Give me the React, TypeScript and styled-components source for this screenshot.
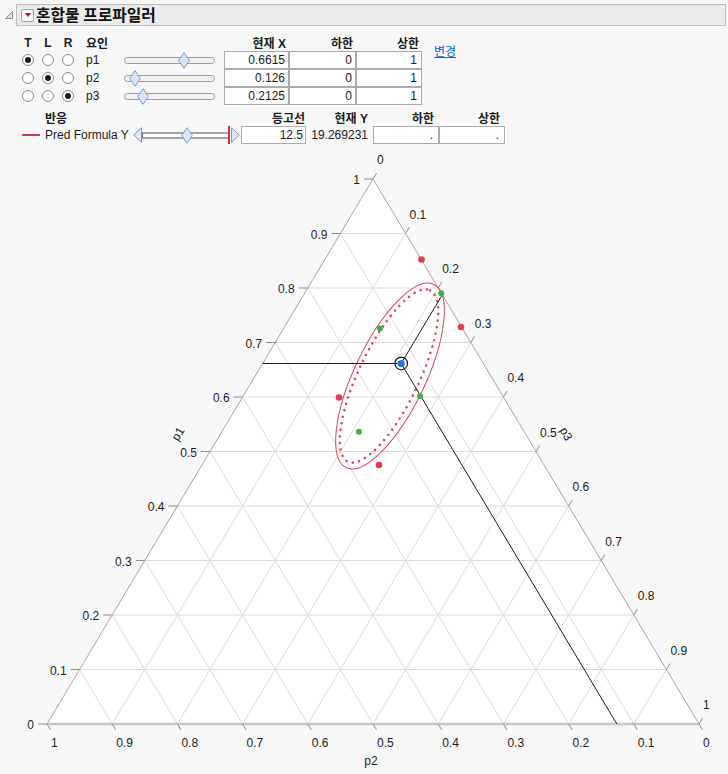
import React from "react";
import styled, { createGlobalStyle } from "styled-components";

const GlobalStyle = createGlobalStyle`
  html, body { margin: 0; padding: 0; background: #f7f7f7; }
  body {
    font-family: "Liberation Sans", "Noto Sans CJK KR", sans-serif;
    font-size: 12px;
    color: #1a1a1a;
  }
  * { box-sizing: border-box; }
`;

const Page = styled.div`
  width: 728px;
  height: 774px;
  overflow: hidden;
  background: #f7f7f7;
  padding-top: 4px;
`;

const TitleRow = styled.div`
  display: flex;
  align-items: center;
  padding-left: 5px;
  padding-right: 2px;
  gap: 3px;
`;

const Disclosure = styled.svg`
  width: 8px;
  height: 8px;
  flex: none;
`;

const TitleBar = styled.div`
  flex: 1;
  height: 22px;
  border: 1px solid #bdbdbd;
  background: #ebebeb;
  display: flex;
  align-items: center;
  padding-left: 4px;
  gap: 2px;
`;

const MenuButton = styled.div`
  width: 13px;
  height: 13px;
  border: 1px solid #a4a4a4;
  border-radius: 2px;
  background: #f6f6f6;
  display: flex;
  align-items: center;
  justify-content: center;
  &::after {
    content: "";
    width: 0;
    height: 0;
    border-left: 3.5px solid transparent;
    border-right: 3.5px solid transparent;
    border-top: 4px solid #d4001a;
  }
`;

const Title = styled.div`
  font-family: "Noto Sans CJK KR", sans-serif;
  font-weight: 700;
  font-size: 15.8px;
  line-height: 20px;
  color: #111;
`;

const FactorGrid = styled.div`
  display: grid;
  grid-template-columns: 20px 20px 20px 46px 100px 65px 67px 66px auto;
  grid-template-rows: 17px 18px 18px 18px;
  margin-top: 8px;
  padding-left: 18px;
`;

const ResponseGrid = styled.div`
  display: grid;
  grid-template-columns: 18px 93px 108px 65px 67px 66px 66px;
  grid-template-rows: 17px 18px;
  margin-top: 4px;
  padding-left: 22px;
`;

const Head = styled.div<{ $align?: "left" | "center" | "right"; $pad?: number }>`
  font-weight: 700;
  display: flex;
  align-items: center;
  justify-content: ${(p) =>
    p.$align === "center" ? "center" : p.$align === "right" ? "flex-end" : "flex-start"};
  padding-left: ${(p) => (p.$align === "left" || !p.$align ? p.$pad ?? 0 : 0)}px;
  padding-right: ${(p) => (p.$align === "right" ? p.$pad ?? 0 : 0)}px;
  white-space: nowrap;
`;

const RadioCell = styled.div`
  display: flex;
  align-items: center;
  justify-content: center;
`;

const Radio = styled.div<{ $on?: boolean }>`
  width: 12px;
  height: 12px;
  border-radius: 50%;
  border: 1px solid #8c8c8c;
  background: #fff;
  display: flex;
  align-items: center;
  justify-content: center;
  &::after {
    content: "";
    width: 6px;
    height: 6px;
    border-radius: 50%;
    background: ${(p) => (p.$on ? "#1a1a1a" : "transparent")};
  }
`;

const NameCell = styled.div<{ $pad?: number }>`
  display: flex;
  align-items: center;
  padding-left: ${(p) => p.$pad ?? 8}px;
  white-space: nowrap;
`;

const SliderCell = styled.div`
  position: relative;
  display: flex;
  align-items: center;
`;

const Track = styled.div`
  width: 91px;
  height: 7px;
  border: 1.5px solid #9c9c9c;
  border-radius: 4px;
  background: #f2f2f2;
`;

const Knob = styled.svg`
  position: absolute;
  top: 1px;
  width: 12px;
  height: 17px;
`;

const ValueBox = styled.div<{ $pad?: number }>`
  height: 18px;
  border: 1px solid #ababab;
  background: #fff;
  text-align: right;
  padding-right: ${(p) => p.$pad ?? 3}px;
  line-height: 16px;
`;

const PlainValue = styled.div`
  display: flex;
  align-items: center;
  justify-content: flex-end;
  padding-right: 5px;
`;

const LinkCell = styled.a`
  grid-column: 9;
  grid-row: 1;
  align-self: start;
  margin-top: 9px;
  padding-left: 12px;
  color: #0a64d8;
  text-decoration: underline;
  font-family: "Noto Sans CJK KR", sans-serif;
  font-size: 12px;
  line-height: 16px;
  white-space: nowrap;
  cursor: pointer;
`;

const RowEnd = styled.span`
  grid-column: 9;
`;

const LegendCell = styled.div`
  display: flex;
  align-items: center;
  &::before {
    content: "";
    width: 18px;
    height: 2px;
    background: #d23c4f;
  }
`;

const ContourSlider = styled.div`
  position: relative;
  display: flex;
  align-items: center;
`;

const Arrow = styled.svg<{ $gap?: number }>`
  width: 9px;
  height: 16px;
  flex: none;
  margin-left: ${(p) => p.$gap ?? 0}px;
`;

const HollowTrack = styled.div`
  width: 87px;
  height: 7px;
  border-top: 2px solid #a3a3a3;
  border-bottom: 2px solid #a3a3a3;
  border-left: 1px solid #6a6a6a;
  background: #fff;
`;

const ContourMark = styled.div`
  position: absolute;
  left: 95px;
  top: 0;
  width: 1.5px;
  height: 18px;
  background: #d3304a;
`;

const Plot = styled.svg`
  display: block;
  margin-top: 6px;
  width: 728px;
  height: 624px;
  font-family: "Liberation Sans", sans-serif;
  font-size: 12px;
`;

const factors = [
  { name: "p1", value: 0.6615, sel: 0, text: "0.6615" },
  { name: "p2", value: 0.126, sel: 1, text: "0.126" },
  { name: "p3", value: 0.2125, sel: 2, text: "0.2125" },
];

const Diamond = ({ left }: { left: number }) => (
  <Knob style={{ left }} viewBox="0 0 12 17">
    <polygon points="6,0.7 11.3,8.5 6,16.3 0.7,8.5" fill="#dbe7f6" stroke="#7c9dc8" strokeWidth="1" />
  </Knob>
);

const LX = 47, RX = 699, AX = 373, BY = 724, AY = 179;
const pt = (p1: number, p2: number, p3: number): [number, number] => [
  LX * p2 + RX * p3 + AX * p1,
  BY * (p2 + p3) + AY * p1,
];

const ticks = Array.from({ length: 11 }, (_, i) => i / 10);
const fmt = (v: number) => (v === 0 ? "0" : v === 1 ? "1" : v.toFixed(1));

const Chart = () => {
  const grid: React.ReactNode[] = [];
  for (let i = 1; i <= 9; i++) {
    const v = i / 10;
    const lines: [[number, number], [number, number]][] = [
      [pt(v, 1 - v, 0), pt(v, 0, 1 - v)],
      [pt(0, v, 1 - v), pt(1 - v, v, 0)],
      [pt(1 - v, 0, v), pt(0, 1 - v, v)],
    ];
    lines.forEach(([a, b], k) =>
      grid.push(
        <line key={`g${i}-${k}`} x1={a[0]} y1={a[1]} x2={b[0]} y2={b[1]} stroke="#dcdcdc" strokeWidth="1" />
      )
    );
  }

  const cur = { p1: 0.6615, p2: 0.126, p3: 0.2125 };
  const c = pt(cur.p1, cur.p2, cur.p3);
  const eL = pt(cur.p1, 1 - cur.p1, 0);
  const eR = pt(1 - cur.p3, 0, cur.p3);
  const eB = pt(0, cur.p2, 1 - cur.p2);

  const red: [number, number][] = [
    [421.5, 259.5],
    [461, 327],
    [339, 397.5],
    [379, 465],
  ];
  const green: [number, number][] = [
    [441.3, 293.3],
    [420, 396],
    [380, 328.5],
    [359, 431.7],
  ];

  return (
    <Plot viewBox="0 0 728 624">
      <g transform="translate(0,-150)">
        <polygon points={`${LX},${BY} ${RX},${BY} ${AX},${AY}`} fill="#fff" />
        {grid}
        <line x1={LX} y1={BY} x2={AX} y2={AY} stroke="#a6a6a6" strokeWidth="1" />
        <line x1={RX} y1={BY} x2={AX} y2={AY} stroke="#a6a6a6" strokeWidth="1" />
        <line x1={LX} y1={BY} x2={RX} y2={BY} stroke="#c8c8c8" strokeWidth="2.5" />

        {ticks.map((v) => {
          const [x, y] = pt(v, 1 - v, 0);
          return (
            <g key={`l${v}`}>
              <line x1={x - 9} y1={y} x2={x} y2={y} stroke="#8e8e8e" strokeWidth="1" />
              <text x={x - 13} y={y + 5} textAnchor="end" fill="#1c1c1c">
                {fmt(v)}
              </text>
            </g>
          );
        })}
        {ticks.map((v) => {
          const [x, y] = pt(0, v, 1 - v);
          return (
            <g key={`b${v}`}>
              <line x1={x} y1={y} x2={x + 3.6} y2={y + 6} stroke="#8e8e8e" strokeWidth="1" />
              <text x={x + 4} y={747} fill="#1c1c1c">
                {fmt(v)}
              </text>
            </g>
          );
        })}
        {ticks.map((v) => {
          const [x, y] = pt(1 - v, 0, v);
          return (
            <g key={`r${v}`}>
              <line x1={x} y1={y} x2={x + 3.6} y2={y - 6} stroke="#8e8e8e" strokeWidth="1" />
              <text x={x + 4} y={y - 15} fill="#1c1c1c">
                {fmt(v)}
              </text>
            </g>
          );
        })}

        <text x={178} y={438} textAnchor="middle" transform="rotate(-59 178 434)" fill="#1c1c1c">
          p1
        </text>
        <text x={566} y={438} textAnchor="middle" transform="rotate(59 566 434)" fill="#1c1c1c">
          p3
        </text>
        <text x={371} y={765} textAnchor="middle" fill="#1c1c1c">
          p2
        </text>

        <ellipse cx={390} cy={376} rx={101.5} ry={35.5} transform="rotate(-64.4 390 376)" fill="none" stroke="#d9485c" strokeWidth="1" />
        <ellipse
          cx={389}
          cy={376}
          rx={95}
          ry={30}
          transform="rotate(-64.4 389 376)"
          fill="none"
          stroke="#d9455a"
          strokeWidth="2.6"
          strokeLinecap="round"
          strokeDasharray="0 6.6"
        />

        <line x1={c[0]} y1={c[1]} x2={eL[0]} y2={eL[1]} stroke="#1a1a1a" strokeWidth="1" />
        <line x1={c[0]} y1={c[1]} x2={eR[0]} y2={eR[1]} stroke="#1a1a1a" strokeWidth="1" />
        <line x1={c[0]} y1={c[1]} x2={eB[0]} y2={eB[1]} stroke="#1a1a1a" strokeWidth="1" />

        {red.map(([x, y], i) => (
          <circle key={`r${i}`} cx={x} cy={y} r={3.3} fill="#e23a51" />
        ))}
        {green.map(([x, y], i) => (
          <circle key={`gr${i}`} cx={x} cy={y} r={3} fill="#3bb54a" />
        ))}
        <circle cx={c[0]} cy={c[1]} r={6.3} fill="none" stroke="#1a1a1a" strokeWidth="1.2" />
        <circle cx={c[0]} cy={c[1]} r={3.6} fill="#2f6fe3" />
      </g>
    </Plot>
  );
};

export default function App() {
  return (
    <>
      <GlobalStyle />
      <Page>
        <TitleRow>
          <Disclosure viewBox="0 0 8 8">
            <polygon points="7.5,0.5 7.5,7.5 0.5,7.5" fill="#e4e4e4" stroke="#8a8a8a" strokeWidth="1" />
          </Disclosure>
          <TitleBar>
            <MenuButton />
            <Title>혼합물 프로파일러</Title>
          </TitleBar>
        </TitleRow>

        <FactorGrid>
          <Head $align="center">T</Head>
          <Head $align="center">L</Head>
          <Head $align="center">R</Head>
          <Head $align="left" $pad={8}>요인</Head>
          <div />
          <Head $align="right" $pad={3}>현재 X</Head>
          <Head $align="right" $pad={3}>하한</Head>
          <Head $align="right" $pad={3}>상한</Head>
          <LinkCell>변경</LinkCell>
          {factors.map((f) => (
            <React.Fragment key={f.name}>
              {[0, 1, 2].map((k) => (
                <RadioCell key={k}>
                  <Radio $on={f.sel === k} />
                </RadioCell>
              ))}
              <NameCell>{f.name}</NameCell>
              <SliderCell>
                <Track />
                <Diamond left={f.value * 91 - 6} />
              </SliderCell>
              <ValueBox>{f.text}</ValueBox>
              <ValueBox>0</ValueBox>
              <ValueBox $pad={4}>1</ValueBox>
              <RowEnd />
            </React.Fragment>
          ))}
        </FactorGrid>

        <ResponseGrid>
          <div />
          <Head $align="left" $pad={5}>반응</Head>
          <div />
          <Head $align="right" $pad={1}>등고선</Head>
          <Head $align="right" $pad={5}>현재 Y</Head>
          <Head $align="right" $pad={5}>하한</Head>
          <Head $align="right" $pad={5}>상한</Head>

          <LegendCell />
          <NameCell $pad={5}>Pred Formula Y</NameCell>
          <ContourSlider>
            <Arrow viewBox="0 0 9 16">
              <polygon points="8.5,0.7 0.7,8 8.5,15.3" fill="#dbe7f6" stroke="#7c9dc8" strokeWidth="1" />
            </Arrow>
            <HollowTrack />
            <Arrow viewBox="0 0 9 16" $gap={2}>
              <polygon points="0.5,0.7 8.3,8 0.5,15.3" fill="#dbe7f6" stroke="#7c9dc8" strokeWidth="1" />
            </Arrow>
            <ContourMark />
            <Diamond left={47.7} />
          </ContourSlider>
          <ValueBox $pad={2}>12.5</ValueBox>
          <PlainValue>19.269231</PlainValue>
          <ValueBox $pad={5}>.</ValueBox>
          <ValueBox $pad={5}>.</ValueBox>
        </ResponseGrid>

        <Chart />
      </Page>
    </>
  );
}
